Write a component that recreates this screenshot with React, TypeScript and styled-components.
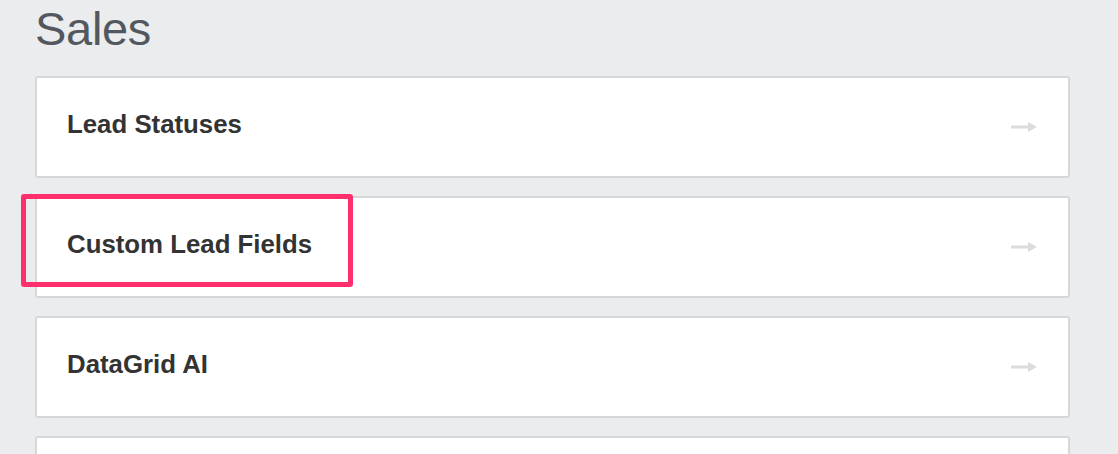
import styled, { createGlobalStyle } from "styled-components";

const GlobalStyle = createGlobalStyle`
  html, body {
    margin: 0;
    padding: 0;
    overflow: hidden;
    background-color: #ebecee;
    font-family: "Liberation Sans", Arial, sans-serif;
  }
`;

const Page = styled.div`
  display: flex;
  flex-direction: column;
  gap: 18px;
  width: 1035px;
  padding-left: 35px;
  height: 454px;
  overflow: hidden;
  box-sizing: content-box;
`;

const Title = styled.h1`
  margin: 0;
  font-size: 47px;
  line-height: 58px;
  font-weight: 400;
  color: #52585e;
  letter-spacing: -0.3px;
`;

const Card = styled.div`
  position: relative;
  flex-shrink: 0;
  display: flex;
  align-items: center;
  justify-content: space-between;
  height: 102px;
  padding: 0 31px 6px 30px;
  box-sizing: border-box;
  background-color: #fff;
  border: 2px solid #d6d7d9;
  border-radius: 3px;
`;

const Label = styled.span`
  font-size: 25.8px;
  font-weight: 700;
  color: #333;
`;

const Arrow = styled.svg`
  width: 26px;
  height: 10px;
  margin-top: 5px;
  fill: #dcdcdc;
`;

// annotation box drawn over the card
const Highlight = styled.div`
  position: absolute;
  left: -16px;
  top: -4px;
  width: 332px;
  height: 93px;
  box-sizing: border-box;
  border: 5px solid #ff2e6c;
  border-radius: 3px;
  pointer-events: none;
`;

const items = [
  { label: "Lead Statuses" },
  { label: "Custom Lead Fields", highlighted: true },
  { label: "DataGrid AI" },
  { label: "" },
];

function RightArrow() {
  return (
    <Arrow viewBox="0 0 26 10">
      <rect x="0" y="3.5" width="19" height="3" />
      <polygon points="17,0 26,5 17,10" />
    </Arrow>
  );
}

export default function App() {
  return (
    <>
      <GlobalStyle />
      <Page>
        <Title>Sales</Title>
        {items.map((item, i) => (
          <Card key={i}>
            <Label>{item.label}</Label>
            <RightArrow />
            {item.highlighted && <Highlight />}
          </Card>
        ))}
      </Page>
    </>
  );
}
